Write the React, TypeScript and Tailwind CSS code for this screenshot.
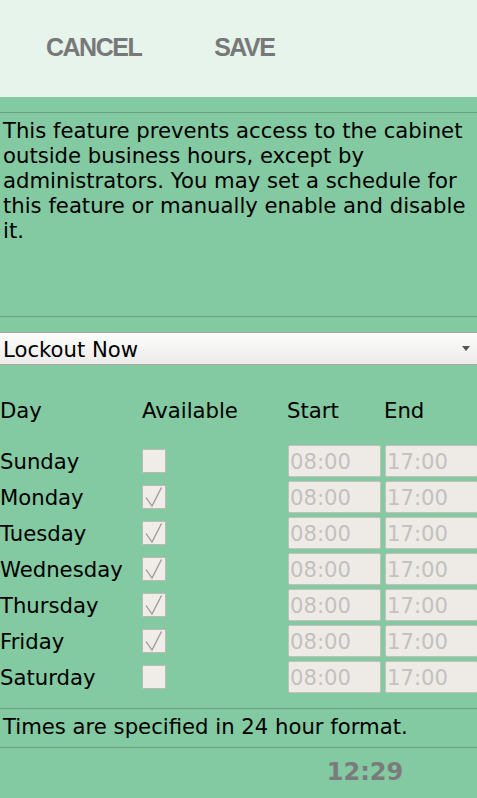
const days = [
  { name: "Sunday", on: false },
  { name: "Monday", on: true },
  { name: "Tuesday", on: true },
  { name: "Wednesday", on: true },
  { name: "Thursday", on: true },
  { name: "Friday", on: true },
  { name: "Saturday", on: false },
];

function Check({ on }: { on: boolean }) {
  return (
    <div className="flex h-[24px] w-[24px] items-center justify-center rounded-[1px] border border-[#bdbab6] bg-[#f0ede9]">
      {on ? (
        <svg width="22" height="22" viewBox="0 0 22 22">
          <path d="M3 11.5 L9 20 L18.5 1.5" fill="none" stroke="#9a9895" strokeWidth="1.3" />
        </svg>
      ) : null}
    </div>
  );
}

function TimeBox({ value }: { value: string }) {
  return (
    <div className="flex h-[32px] w-[93px] items-center rounded-[2px] border border-[#c4c1bd] bg-[#eeebe7] pl-[1px] pt-[2px] text-[#c3c1be]">
      {value}
    </div>
  );
}

export default function App() {
  return (
    <div
      className="h-[798px] w-[477px] overflow-hidden bg-[#83c9a1] text-[21.2px] text-black"
      style={{ fontFamily: '"DejaVu Sans", sans-serif' }}
    >
      <header className="flex h-[97px] items-center bg-[#e6f4ec] pb-[2px] text-[25px] font-bold tracking-[-1.5px] text-[#787878]" style={{ fontFamily: '"Liberation Sans", Arial, sans-serif' }}>
        <span className="ml-[46px]">CANCEL</span>
        <span className="ml-[73px]">SAVE</span>
      </header>
      <div className="h-[15px]" />
      <div className="h-px bg-[#69a282]" />
      <div className="h-[203px] px-[3px] pt-[5px] leading-[25px]">
        This feature prevents access to the cabinet outside business hours, except by administrators. You may set a
        schedule for this feature or manually enable and disable it.
      </div>
      <div className="h-px bg-[#69a282]" />
      <div className="h-[15px]" />
      <div className="flex h-[33px] items-center justify-between border-y border-[#a9a7a4] bg-gradient-to-b from-[#fdfdfc] to-[#ecebe9] pl-[3px] pr-[7px]">
        <span className="pt-[2px]">Lockout Now</span>
        <svg width="8" height="5" viewBox="0 0 8 5">
          <path d="M0 0 H8 L4 5 Z" fill="#555" />
        </svg>
      </div>
      <div className="h-[27px]" />
      <div className="grid h-[36px] grid-cols-[142px_145px_97px_1fr] items-center pt-[2px]">
        <span>Day</span>
        <span>Available</span>
        <span>Start</span>
        <span>End</span>
      </div>
      <div className="h-[15px]" />
      {days.map((d) => (
        <div key={d.name} className="grid h-[36px] grid-cols-[142px_145px_97px_1fr] items-center">
          <span className="pt-[2px]">{d.name}</span>
          <Check on={d.on} />
          <div className="pl-px">
            <TimeBox value="08:00" />
          </div>
          <div className="pl-px">
            <TimeBox value="17:00" />
          </div>
        </div>
      ))}
      <div className="h-[13px]" />
      <div className="h-px bg-[#69a282]" />
      <div className="flex h-[38px] items-center pb-[2px] pl-[3px]">Times are specified in 24 hour format.</div>
      <div className="h-px bg-[#69a282]" />
      <div className="flex h-[50px] items-center justify-center pb-[2px] pl-[253px] text-[24px] font-bold text-[#7b7b7b]">
        12:29
      </div>
    </div>
  );
}
